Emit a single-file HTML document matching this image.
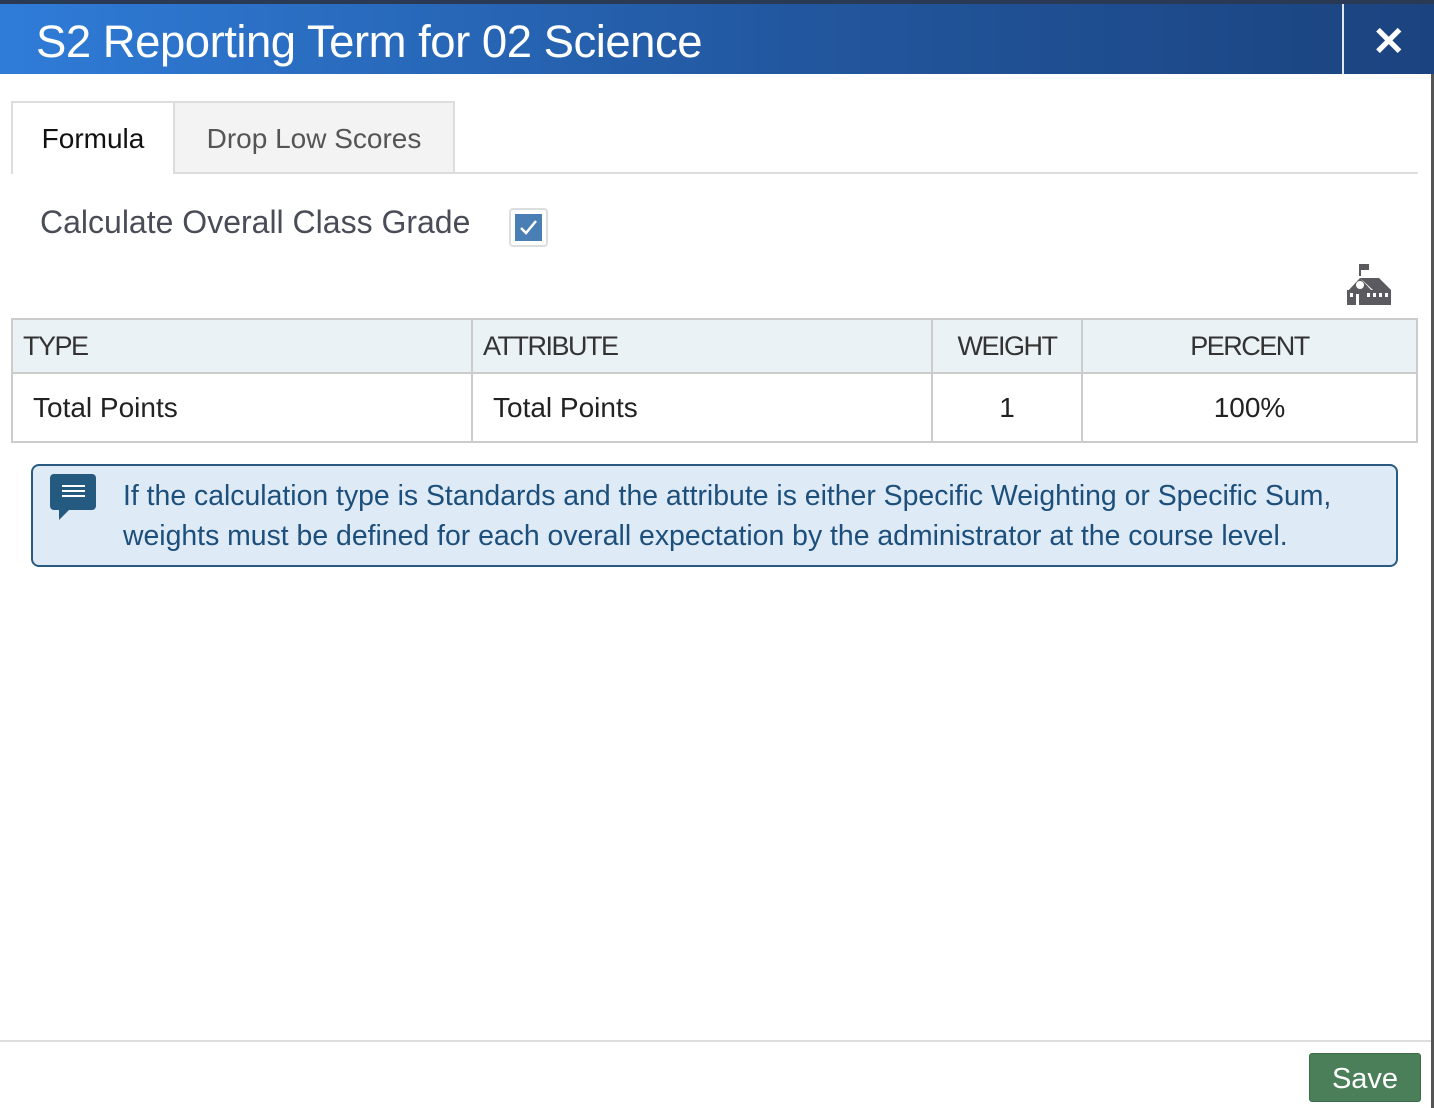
<!DOCTYPE html>
<html><head><style>
*{margin:0;padding:0;box-sizing:border-box}
body{width:1434px;height:1108px;position:relative;background:#fff;font-family:"Liberation Sans",sans-serif;overflow:hidden}
.top{position:absolute;left:0;top:0;width:1434px;height:4px;background:#2a3a55}
.hdr{position:absolute;left:0;top:4px;width:1434px;height:70px;background:linear-gradient(90deg,#2f7cd8,#22579f 55%,#1b437f)}
.hdr h1{position:absolute;left:36px;top:12px;font-size:45.5px;font-weight:normal;color:#fff;letter-spacing:-0.5px}
.sep{position:absolute;left:1342px;top:4px;width:2px;height:70px;background:#dfe6f0}
.x{position:absolute;left:1372px;top:19px;color:#fff;font-size:40px;font-weight:bold}
.rb{position:absolute;left:1431px;top:74px;width:3px;height:1034px;background:#555}
.tab{position:absolute;top:101px;height:73px;font-size:28px;line-height:72px;text-align:center}
.t1{left:11px;width:164px;border:2px solid #ddd;border-bottom:none;background:#fff;color:#111}
.t2{left:175px;width:280px;border:2px solid #ddd;border-left:none;background:#f3f3f3;color:#555}
.tl{position:absolute;left:454px;top:172px;width:964px;height:2px;background:#ddd}
.lbl{position:absolute;left:40px;top:204px;font-size:32px;color:#4a4d57}
.cb{position:absolute;left:509px;top:208px;width:39px;height:39px;border:2px solid #ddd;border-radius:4px;background:#fff}
.cb div{position:absolute;left:4px;top:4px;width:27px;height:27px;background:#4a7fb5}
table{position:absolute;left:11px;top:318px;width:1407px;border-collapse:collapse}
td,th{border:2px solid #ccc;font-weight:normal;font-size:28px;color:#222}
th{height:54px;background:#eaf2f6;text-align:left;padding-left:10px;font-weight:300;letter-spacing:-1.5px;color:#333;font-size:27px}
td{height:69px;padding-left:20px}
.info{position:absolute;left:31px;top:464px;width:1367px;height:103px;background:#deeaf5;border:2px solid #2b5a80;border-radius:8px}
.info p{position:absolute;left:90px;top:10px;font-size:28.4px;line-height:40px;color:#1d4f7c;white-space:nowrap}
.fl{position:absolute;left:0;top:1040px;width:1431px;height:2px;background:#ddd}
.save{position:absolute;left:1309px;top:1053px;width:112px;height:49px;background:#4a7f59;border:1px solid #3d6b4a;border-radius:3px;color:#fff;font-size:29px;text-align:center;line-height:50px}
</style></head><body>
<div class="top"></div>
<div class="hdr"><h1>S2 Reporting Term for 02 Science</h1></div>
<div class="sep"></div>
<div class="x">✕</div>
<div class="rb"></div>
<div class="tab t1">Formula</div>
<div class="tab t2">Drop Low Scores</div>
<div class="tl"></div>
<div class="lbl">Calculate Overall Class Grade</div>
<div class="cb"><div><svg width="27" height="27" viewBox="0 0 27 27"><path d="M6 14l5 5 10-12" stroke="#fff" stroke-width="2.5" fill="none"/></svg></div></div>
<svg style="position:absolute;left:1346px;top:264px" width="46" height="42" viewBox="0 0 46 42"><rect x="13" y="0" width="2" height="12" fill="#5a5a5f"/><rect x="15" y="0" width="8" height="6" fill="#5a5a5f"/><path d="M1 28 L14 14 L27 28 Z" fill="#5a5a5f"/><path d="M14 14 H33 L45 26 H27 Z" fill="#5a5a5f"/><rect x="1" y="26" width="44" height="15" fill="#5a5a5f"/><circle cx="14" cy="21" r="4" fill="#fff"/><rect x="4" y="29" width="3" height="4" fill="#fff"/><rect x="21" y="29" width="3" height="4" fill="#fff"/><rect x="27" y="29" width="3" height="4" fill="#fff"/><rect x="33" y="29" width="3" height="4" fill="#fff"/><rect x="39" y="29" width="3" height="4" fill="#fff"/><rect x="10" y="30" width="3" height="11" fill="#fff"/></svg>
<table>
<tr><th style="width:460px">TYPE</th><th style="width:460px">ATTRIBUTE</th><th style="width:150px;text-align:center;padding:0">WEIGHT</th><th style="text-align:center;padding:0">PERCENT</th></tr>
<tr><td>Total Points</td><td>Total Points</td><td style="text-align:center;padding:0">1</td><td style="text-align:center;padding:0">100%</td></tr>
</table>
<div class="info">
<svg style="position:absolute;left:17px;top:8px" width="47" height="48" viewBox="0 0 47 48"><rect x="0" y="0" width="46" height="36" rx="4" fill="#255a80"/><path d="M9 35 L9 46 L20 35 Z" fill="#255a80"/><rect x="12" y="11" width="23" height="2" fill="#fff"/><rect x="12" y="16" width="23" height="2" fill="#fff"/><rect x="12" y="21" width="23" height="2" fill="#fff"/></svg>
<p>If the calculation type is Standards and the attribute is either Specific Weighting or Specific Sum,<br>weights must be defined for each overall expectation by the administrator at the course level.</p>
</div>
<div class="fl"></div>
<div class="save">Save</div>
</body></html>
